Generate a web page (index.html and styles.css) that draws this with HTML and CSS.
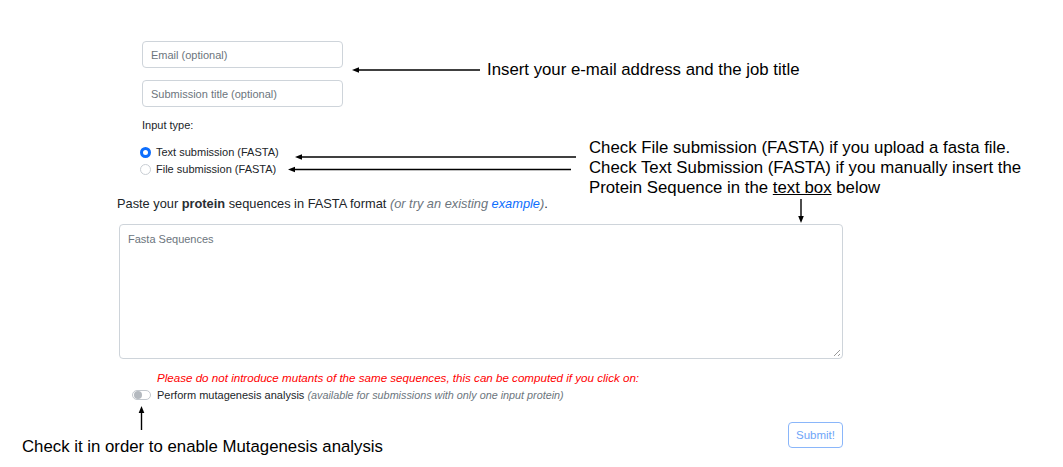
FILE: index.html
```html
<!DOCTYPE html>
<html lang="en">
<head>
<meta charset="utf-8">
<title>Submission form</title>
<link rel="stylesheet" href="styles.css">
</head>
<body>
<div class="canvas">
  <form class="form">
    <div class="top-fields">
      <input class="field" type="text" placeholder="Email (optional)">
      <input class="field" type="text" placeholder="Submission title (optional)">
    </div>
    <div class="input-type">Input type:</div>
    <div class="radios">
      <label class="radio-row"><span class="radio checked"></span>Text submission (FASTA)</label>
      <label class="radio-row"><span class="radio"></span>File submission (FASTA)</label>
    </div>
    <p class="paste">Paste your <strong>protein</strong> sequences in FASTA format <em class="muted">(or try an existing <a href="#" class="link">example</a>)</em>.</p>
    <div class="textarea"><span class="placeholder">Fasta Sequences</span><span class="grip"></span></div>
    <p class="warning">Please do not introduce mutants of the same sequences, this can be computed if you click on:</p>
    <label class="switch-row"><span class="switch"><span class="knob"></span></span><span class="switch-text">Perform mutagenesis analysis <em class="muted small">(available for submissions with only one input protein)</em></span></label>
    <div class="actions"><button type="button" class="submit">Submit!</button></div>
  </form>

  <svg class="arrows" width="1063" height="467" viewBox="0 0 1063 467" aria-hidden="true">
    <g stroke="#000" stroke-width="1.4" fill="none">
      <line x1="358" y1="70" x2="480" y2="70"/>
      <line x1="301" y1="157" x2="576" y2="157"/>
      <line x1="294" y1="169.5" x2="571" y2="169.5"/>
      <line x1="801" y1="199" x2="801" y2="217"/>
      <line x1="141.5" y1="430" x2="141.5" y2="412"/>
    </g>
    <g fill="#000">
      <polygon points="352,70 359,67.2 359,72.8"/>
      <polygon points="295,157 302,154.2 302,159.8"/>
      <polygon points="288,169.5 295,166.7 295,172.3"/>
      <polygon points="801,223 798.2,216 803.8,216"/>
      <polygon points="141.5,406 138.7,413 144.3,413"/>
    </g>
  </svg>

  <div class="note note-email">Insert your e-mail address and the job title</div>
  <div class="note note-type">Check File submission (FASTA) if you upload a fasta file.<br>Check Text Submission (FASTA) if you manually insert the<br>Protein Sequence in the <u>text box</u> below</div>
  <div class="note note-mut">Check it in order to enable Mutagenesis analysis</div>
</div>
</body>
</html>
```

FILE: styles.css
```css
* { box-sizing: border-box; }
html, body { margin: 0; padding: 0; background: #fff; }
body {
  font-family: "Liberation Sans", Arial, Helvetica, sans-serif;
  color: #212529;
  width: 1063px;
  height: 467px;
  overflow: hidden;
}
.canvas { position: relative; width: 1063px; height: 467px; }

.form {
  width: 724px;
  margin-left: 119px;
  padding-top: 41px;
  font-size: 11px;
  line-height: 14px;
}
.top-fields {
  margin-left: 23px;
  width: 201px;
  display: flex;
  flex-direction: column;
  gap: 12px;
}
.field {
  height: 27px;
  border: 1px solid #ced4da;
  border-radius: 4px;
  padding: 0 8px;
  font: 11px "Liberation Sans", Arial, sans-serif;
  color: #212529;
  outline: none;
}
.field::placeholder { color: #6c757d; }

.input-type { margin: 11px 0 0 23px; }

.radios {
  margin: 13px 0 0 21px;
  display: flex;
  flex-direction: column;
  gap: 3px;
}
.radio-row { display: flex; align-items: center; gap: 5px; height: 14px; }
.radio {
  width: 11px; height: 11px;
  border-radius: 50%;
  border: 1px solid #c9ced4;
  background: #fff;
  flex: none;
}
.radio.checked {
  border: 3px solid #0d6efd;
  background: #fff;
}

.paste {
  margin: 19px 0 0 -2px;
  font-size: 12.8px;
  line-height: 18px;
}
.paste strong { font-weight: 700; color: #2a2e33; }
.muted { color: #6c757d; font-style: italic; }
.small { font-size: 10.8px; }
.link { color: #0d6efd; text-decoration: none; }

.textarea {
  position: relative;
  margin-top: 11px;
  height: 135px;
  border: 1px solid #ced4da;
  border-radius: 4px;
  padding: 7px 8px;
}
.placeholder { color: #6c757d; }
.grip {
  position: absolute;
  right: 2px; bottom: 2px;
  width: 6px; height: 6px;
  background: linear-gradient(135deg, transparent 45%, #999 45%, #999 55%, transparent 55%, transparent 75%, #999 75%, #999 85%, transparent 85%);
}

.warning {
  margin: 12px 0 0 38px;
  color: #ff0000;
  font-style: italic;
  font-size: 11.6px;
}
.switch-row {
  display: flex;
  align-items: center;
  gap: 6px;
  margin: 3px 0 0 13px;
  height: 14px;
}
.switch-text { white-space: nowrap; }
.switch {
  width: 19px; height: 10px;
  border: 1px solid #c3c8ce;
  border-radius: 6px;
  display: flex;
  align-items: center;
  padding-left: 1px;
  flex: none;
}
.knob {
  width: 8px; height: 8px;
  border-radius: 50%;
  background: #b4b9bf;
}

.actions {
  display: flex;
  justify-content: flex-end;
  margin-top: 20px;
}
.submit {
  width: 55px; height: 26px;
  border: 1px solid #8ab6fa;
  border-radius: 4px;
  background: #fff;
  color: #6ea5f8;
  font: 11.5px "Liberation Sans", Arial, sans-serif;
  padding: 0;
}

.arrows { position: absolute; left: 0; top: 0; pointer-events: none; }
.note {
  position: absolute;
  font-size: 16.8px;
  line-height: 20px;
  color: #000;
  white-space: nowrap;
}
.note-email { left: 487px; top: 60px; }
.note-type { left: 589px; top: 138px; }
.note-mut { left: 22px; top: 437px; }
```
